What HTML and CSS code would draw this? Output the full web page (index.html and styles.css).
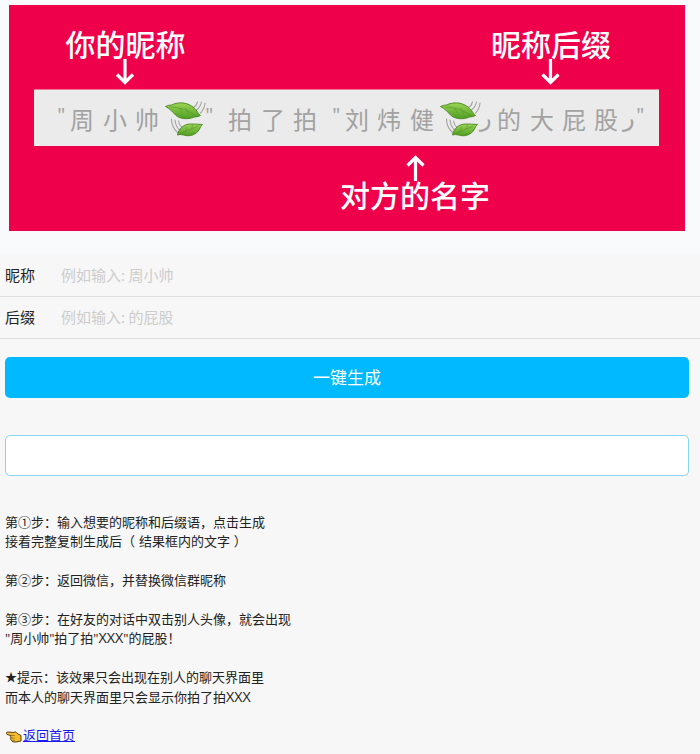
FILE: index.html
```html
<!DOCTYPE html>
<html lang="zh-CN">
<head>
<meta charset="utf-8">
<title>拍一拍后缀生成</title>
<link rel="stylesheet" href="styles.css">
</head>
<body>
<header class="banner">
<svg class="banner-art" viewBox="9 5 676 226" width="676" height="226">
  <defs>
    <linearGradient id="leaf-fill" x1="0" y1="0" x2="0" y2="1">
      <stop offset="0" stop-color="#9bd455"/>
      <stop offset="1" stop-color="#4f9e22"/>
    </linearGradient>
    <g id="leaves">
      <g fill="none" stroke="#a3a3a3" stroke-width="1.100" stroke-linecap="round">
        <path d="M28 6.500Q31 5 32 1M31 9Q35 6 36 1M35 12Q39 8 39.500 2"/>
        <path d="M6 18Q6 26 12 31.500M9.500 19Q10 25 14 29M13 20Q13.500 24 17 27"/>
      </g>
      <g fill="url(#leaf-fill)" stroke="#49851f" stroke-width=".9" stroke-linejoin="round">
        <path d="M0 5.500Q3 4 6 4C12 1 20 1 26 5C31 8 32 12 35 14.500Q32 16 29 16C22 19 14 18 10 14C7 11 5 8 0 5.500Z"/>
        <path d="M12 34C13 28 18 23 25 23Q31 23 37 23.500Q35 25 34 28C31 34 24 36 18 34Q15 33 12 34Z"/>
      </g>
      <path d="M5 6Q18 6 31 15M14 7l3 5M20 7l3 6M14 33Q21 30 33 25M20 31l1-5M26 28l1-4" fill="none" stroke="#4c8b25" stroke-width=".5"/>
    </g>
  </defs>
  <rect x="9" y="5" width="676" height="226" fill="#ef004b"/>
  <rect x="34" y="89.500" width="625" height="56.500" fill="#ebebeb"/>
  <g class="caption">
    <text x="65.500" y="56">你的昵称</text>
    <text x="491" y="56">昵称后缀</text>
    <text x="340" y="207">对方的名字</text>
  </g>
  <g fill="none" stroke="#fff" stroke-width="3.200">
    <path d="M125 59V82M117 74.500l8 8l8-8"/>
    <path d="M550.500 59V82M542.500 74.500l8 8l8-8"/>
    <path d="M415.500 181V158M407.500 165.500l8-8l8 8"/>
  </g>
  <g class="message">
    <text class="quote" x="57" y="124">"</text>
    <text x="70 103 135" y="129">周小帅</text>
    <text class="quote" x="205" y="124">"</text>
    <text x="228 261 293" y="129">拍了拍</text>
    <text class="quote" x="332" y="124">"</text>
    <text x="345 377 410" y="129">刘炜健</text>
    <text class="tail" x="480" y="126">ر</text>
    <text x="497 530 562 594" y="129">的大屁股</text>
    <text class="tail" x="623" y="126">ر</text>
    <text class="quote" x="636" y="124">"</text>
  </g>
  <use href="#leaves" x="165.500" y="101"/>
  <use href="#leaves" x="440.500" y="101"/>
</svg>
</header>
<main>
  <form class="form">
    <label class="field"><span class="field-name">昵称</span><input class="field-input" type="text" placeholder="例如输入: 周小帅"></label>
    <label class="field"><span class="field-name">后缀</span><input class="field-input" type="text" placeholder="例如输入: 的屁股"></label>
    <button class="submit" type="button">一键生成</button>
    <div class="result"></div>
  </form>
  <section class="help">
    <p>第①步：输入想要的昵称和后缀语，点击生成<br>接着完整复制生成后<span class="note">（ 结果框内的文字 ）</span></p>
    <p>第②步：返回微信，并替换微信群昵称</p>
    <p>第③步：在好友的对话中双击别人头像，就会出现<br><span class="quoted">"周小帅"拍了拍"<span class="latin">XXX</span>"的屁股！</span></p>
    <p><span class="star">★</span>提示：该效果只会出现在别人的聊天界面里<br>而本人的聊天界面里只会显示你拍了拍<span class="latin">XXX</span></p>
    <p><a class="home" href="#"><svg class="hand" viewBox="0 0 18 13" width="18" height="13"><path d="M1.500 3.500Q1 2 3 2L9 2.500Q10 1 11.500 2.500L13 4L16 5.500V11L11 12Q7 12.500 6.500 10.500Q5 9.500 6 8Q5 7 6 5.500L3 4.800Q1.700 4.700 1.500 3.500Z" fill="#f5bd2e" stroke="#59420f" stroke-width="1"/><path d="M6 5.500h4M6 8h4M7 10.300h3" stroke="#8a6514" stroke-width=".7"/></svg>返回首页</a></p>
  </section>
</main>
</body>
</html>
```
FILE: styles.css
```css
* {
  box-sizing: border-box;
}

body {
  margin: 0;
  background: #f7f7f7;
  color: #222;
  font-family: "Noto Sans CJK SC", sans-serif;
  font-weight: 400;
}

.banner {
  height: 254px;
  padding: 5px 0 0 9px;
  background: #f8fafc;
}

.banner-art {
  display: block;
}

.caption {
  fill: #fff;
  font-size: 30px;
  font-weight: 500;
}

.message {
  fill: #a2a2a2;
  font-size: 24px;
  font-weight: 400;
}

.tail {
  font-family: "DejaVu Sans", sans-serif;
}

.quote {
  font-size: 18px;
}

.field {
  display: flex;
  align-items: center;
  height: 42px;
  padding: 0 0 2px 5px;
  border-bottom: 1px solid #dedede;
  font-size: 15px;
}

.field:first-child {
  height: 43px;
}

.field-name {
  width: 56px;
}

.field-input {
  flex: 1;
  padding: 0;
  border: 0;
  background: none;
  font: inherit;
}

.field-input::placeholder {
  color: #cdcdcd;
}

.submit,
.result {
  display: block;
  width: 684px;
  height: 41px;
  margin-left: 5px;
  border-radius: 5px;
}

.submit {
  margin-top: 18px;
  padding: 0 0 2px;
  border: 0;
  background: #00b9ff;
  color: #fff;
  font: 400 17px/39px "Noto Sans CJK SC", sans-serif;
}

.result {
  margin-top: 37px;
  border: 1px solid #85d5f3;
  background: #fff;
}

.help {
  padding: 35.5px 5px 0;
  font-size: 13px;
  line-height: 19.45px;
}

.help p {
  margin: 0 0 19.45px;
}

.help p:last-child {
  margin-bottom: 0;
}

.note {
  word-spacing: 1px;
}

.quoted {
  font-family: "Open Sans", "Noto Sans CJK SC", sans-serif;
  line-height: 1;
}

.latin {
  font-family: "Open Sans", sans-serif;
  font-size: 14.3px;
  line-height: 1;
}

.star {
  display: inline-block;
  width: 12px;
  font-size: 12px;
  line-height: 1;
}

.home {
  color: #1a1aee;
}

.hand {
  vertical-align: -3px;
}
```
